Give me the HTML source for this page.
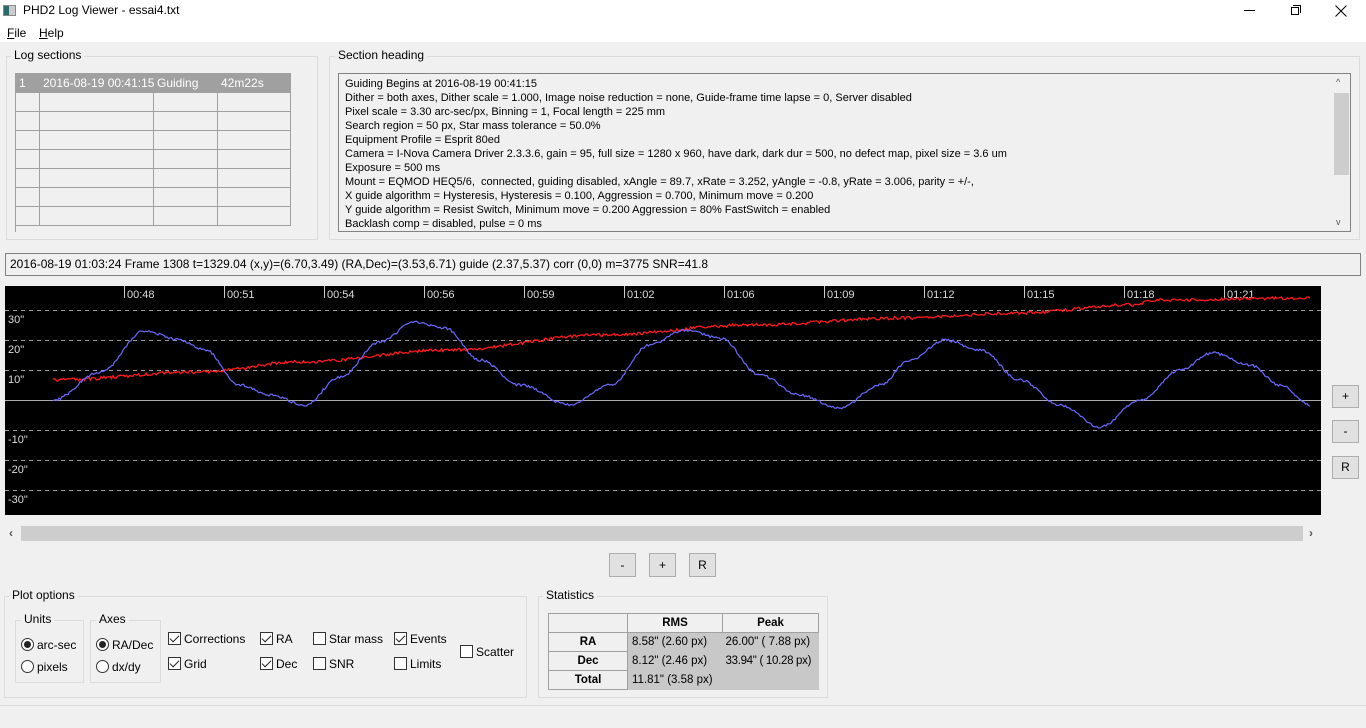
<!DOCTYPE html>
<html><head><meta charset="utf-8">
<style>
*{box-sizing:border-box;margin:0;padding:0}
body{width:1366px;height:728px;background:#f0f0f0;font-family:"Liberation Sans",Arial,sans-serif;font-size:12px;color:#000;position:relative;overflow:hidden}
.a{position:absolute}
.gb{position:absolute;border:1px solid #dcdcdc}
.gl{position:absolute;background:#f0f0f0;padding:0 3px;font-size:12px}
.btn{position:absolute;background:#e1e1e1;border:1px solid #adadad;text-align:center;font-size:12px}
.cb{position:absolute;width:13px;height:13px;border:1px solid #333;background:#fff}
.cb.c::after{content:"";position:absolute;left:3px;top:0px;width:4px;height:8px;border:solid #222;border-width:0 1.5px 1.5px 0;transform:rotate(45deg)}
.rb{position:absolute;width:13px;height:13px;border:1px solid #333;border-radius:50%;background:#fff}
.rb.c::after{content:"";position:absolute;left:2px;top:2px;width:7px;height:7px;border-radius:50%;background:#222}
table{border-collapse:collapse;table-layout:fixed}
.st td,.st th{height:19px;padding:0;white-space:nowrap;overflow:hidden;font-size:11.5px}
</style></head><body>
<div class="a" style="left:0;top:0;width:1366px;height:42px;background:#fff"></div>
<div class="a" style="left:3px;top:5px;width:13px;height:11px;border:1px solid #888;background:#ccc"><div style="width:5px;height:9px;background:#2a6a6a"></div></div>
<div class="a" style="left:23px;top:3px;font-size:12px">PHD2 Log Viewer - essai4.txt</div>
<div class="a" style="left:1244px;top:10px;width:11px;height:1px;background:#000"></div>
<div class="a" style="left:1291px;top:7px;width:8px;height:8px;border:1px solid #000"></div>
<div class="a" style="left:1293px;top:5px;width:8px;height:8px;border-top:1px solid #000;border-right:1px solid #000"></div>
<svg class="a" style="left:1335px;top:5px" width="12" height="12"><path d="M0.5 0.5L11.5 11.5M11.5 0.5L0.5 11.5" stroke="#000" stroke-width="1"/></svg>
<div class="a" style="left:7px;top:26px"><u>F</u>ile</div>
<div class="a" style="left:39px;top:26px"><u>H</u>elp</div>

<div class="gb" style="left:6px;top:56px;width:312px;height:184px"></div>
<div class="gl" style="left:11px;top:48px">Log sections</div>
<div class="a" style="left:15px;top:73px;width:276px;height:159px;border-left:1px solid #a0a0a0;overflow:hidden;background:#f0f0f0">
<div class="a" style="left:0;top:0;width:275px;height:20px;background:#a0a0a0;color:#fff"></div>
<div class="a" style="left:3px;top:3px;color:#fff">1</div>
<div class="a" style="left:27px;top:3px;color:#fff">2016-08-19 00:41:15</div>
<div class="a" style="left:141px;top:3px;color:#fff">Guiding</div>
<div class="a" style="left:205px;top:3px;color:#fff">42m22s</div>
<div class="a" style="left:0;top:20px;width:275px;height:133px;background:repeating-linear-gradient(to bottom,transparent 0,transparent 18px,#a0a0a0 18px,#a0a0a0 19px)"></div>
<div class="a" style="left:23px;top:20px;width:1px;height:133px;background:#a0a0a0"></div>
<div class="a" style="left:137px;top:20px;width:1px;height:133px;background:#a0a0a0"></div>
<div class="a" style="left:201px;top:20px;width:1px;height:133px;background:#a0a0a0"></div>
<div class="a" style="left:274px;top:0;width:1px;height:153px;background:#a0a0a0"></div>
</div>

<div class="gb" style="left:329px;top:56px;width:1031px;height:184px"></div>
<div class="gl" style="left:335px;top:48px">Section heading</div>
<div class="a" style="left:338px;top:73px;width:1013px;height:159px;border:1px solid #828282;background:#f0f0f0;padding:3px 0 0 6px;line-height:14px;font-size:11px">
Guiding Begins at 2016-08-19 00:41:15<br>
Dither = both axes, Dither scale = 1.000, Image noise reduction = none, Guide-frame time lapse = 0, Server disabled<br>
Pixel scale = 3.30 arc-sec/px, Binning = 1, Focal length = 225 mm<br>
Search region = 50 px, Star mass tolerance = 50.0%<br>
Equipment Profile = Esprit 80ed<br>
Camera = I-Nova Camera Driver 2.3.3.6, gain = 95, full size = 1280 x 960, have dark, dark dur = 500, no defect map, pixel size = 3.6 um<br>
Exposure = 500 ms<br>
Mount = EQMOD HEQ5/6,&nbsp; connected, guiding disabled, xAngle = 89.7, xRate = 3.252, yAngle = -0.8, yRate = 3.006, parity = +/-,<br>
X guide algorithm = Hysteresis, Hysteresis = 0.100, Aggression = 0.700, Minimum move = 0.200<br>
Y guide algorithm = Resist Switch, Minimum move = 0.200 Aggression = 80% FastSwitch = enabled<br>
Backlash comp = disabled, pulse = 0 ms
<div class="a" style="left:994px;top:0;width:17px;height:157px;background:#f0f0f0"></div>
<div class="a" style="left:997px;top:1px;font-size:9px;color:#555">^</div>
<div class="a" style="left:995px;top:19px;width:15px;height:82px;background:#cdcdcd"></div>
<div class="a" style="left:997px;top:141px;font-size:9px;color:#555">v</div>
</div>

<div class="a" style="left:5px;top:253px;width:1356px;height:23px;border:1px solid #828282;padding:3px 0 0 4px">2016-08-19 01:03:24 Frame 1308 t=1329.04 (x,y)=(6.70,3.49) (RA,Dec)=(3.53,6.71) guide (2.37,5.37) corr (0,0) m=3775 SNR=41.8</div>

<svg class="a" style="left:5px;top:286px" width="1316" height="229" viewBox="5 286 1316 229">
<rect x="5" y="286" width="1316" height="229" fill="#000"/>
<g stroke="#9a9a9a" stroke-dasharray="4,4" stroke-width="1">
<line x1="5" x2="1321" y1="310.5" y2="310.5"/><line x1="5" x2="1321" y1="340.5" y2="340.5"/><line x1="5" x2="1321" y1="370.5" y2="370.5"/>
<line x1="5" x2="1321" y1="430.5" y2="430.5"/><line x1="5" x2="1321" y1="460.5" y2="460.5"/><line x1="5" x2="1321" y1="490.5" y2="490.5"/>
</g>
<line x1="5" x2="1321" y1="400.5" y2="400.5" stroke="#aaa"/>
<g fill="#ddd" font-size="11" font-family="Liberation Sans,sans-serif">
<text x="8" y="323">30"</text><text x="8" y="353">20"</text><text x="8" y="383">10"</text>
<text x="8" y="443">-10"</text><text x="8" y="473">-20"</text><text x="8" y="503">-30"</text>
</g>
<g id="ticks" fill="#ddd" font-size="11" font-family="Liberation Sans,sans-serif" stroke-width="1"></g>
<polyline id="red" fill="none" stroke="#ff1a1a" stroke-width="1.3"/>
<polyline id="blue" fill="none" stroke="#6a6aff" stroke-width="1.2"/>
</svg>

<div class="a" style="left:5px;top:525px;width:1316px;height:17px;background:#f0f0f0"></div>
<div class="a" style="left:21px;top:526px;width:1282px;height:15px;background:#cdcdcd"></div>
<div class="a" style="left:9px;top:526px;font-size:12px;color:#555;font-weight:bold">‹</div>
<div class="a" style="left:1309px;top:526px;font-size:12px;color:#555;font-weight:bold">›</div>

<div class="btn" style="left:1332px;top:385px;width:27px;height:23px;line-height:21px">+</div>
<div class="btn" style="left:1332px;top:420px;width:27px;height:23px;line-height:21px">-</div>
<div class="btn" style="left:1332px;top:456px;width:27px;height:23px;line-height:21px">R</div>
<div class="btn" style="left:609px;top:553px;width:27px;height:24px;line-height:22px">-</div>
<div class="btn" style="left:649px;top:553px;width:27px;height:24px;line-height:22px">+</div>
<div class="btn" style="left:689px;top:553px;width:27px;height:24px;line-height:22px">R</div>

<div class="gb" style="left:4px;top:596px;width:523px;height:102px"></div>
<div class="gl" style="left:9px;top:588px">Plot options</div>
<div class="gb" style="left:15px;top:620px;width:69px;height:63px"></div>
<div class="gl" style="left:21px;top:612px">Units</div>
<div class="rb c" style="left:21px;top:638px"></div><div class="a" style="left:37px;top:638px">arc-sec</div>
<div class="rb" style="left:21px;top:660px"></div><div class="a" style="left:37px;top:660px">pixels</div>
<div class="gb" style="left:90px;top:620px;width:71px;height:63px"></div>
<div class="gl" style="left:96px;top:612px">Axes</div>
<div class="rb c" style="left:96px;top:638px"></div><div class="a" style="left:112px;top:638px">RA/Dec</div>
<div class="rb" style="left:96px;top:660px"></div><div class="a" style="left:112px;top:660px">dx/dy</div>
<div class="cb c" style="left:168px;top:632px"></div><div class="a" style="left:184px;top:632px">Corrections</div>
<div class="cb c" style="left:168px;top:657px"></div><div class="a" style="left:184px;top:657px">Grid</div>
<div class="cb c" style="left:260px;top:632px"></div><div class="a" style="left:276px;top:632px">RA</div>
<div class="cb c" style="left:260px;top:657px"></div><div class="a" style="left:276px;top:657px">Dec</div>
<div class="cb" style="left:313px;top:632px"></div><div class="a" style="left:329px;top:632px">Star mass</div>
<div class="cb" style="left:313px;top:657px"></div><div class="a" style="left:329px;top:657px">SNR</div>
<div class="cb c" style="left:394px;top:632px"></div><div class="a" style="left:410px;top:632px">Events</div>
<div class="cb" style="left:394px;top:657px"></div><div class="a" style="left:410px;top:657px">Limits</div>
<div class="cb" style="left:460px;top:645px"></div><div class="a" style="left:476px;top:645px">Scatter</div>

<div class="gb" style="left:538px;top:596px;width:290px;height:102px"></div>
<div class="gl" style="left:543px;top:588px">Statistics</div>
<table class="a st" style="left:548px;top:613px;width:270px">
<colgroup><col style="width:79px"><col style="width:95px"><col style="width:96px"></colgroup>
<tr><td style="border:1px solid #a0a0a0;background:#f0f0f0"></td><th style="border:1px solid #a0a0a0;background:#f0f0f0">RMS</th><th style="border:1px solid #a0a0a0;background:#f0f0f0">Peak</th></tr>
<tr><th style="border:1px solid #a0a0a0;background:#f0f0f0">RA</th><td style="background:#c8c8c8;padding-left:4px">8.58" (2.60 px)</td><td style="background:#c8c8c8;padding-left:3px">26.00" ( 7.88 px)</td></tr>
<tr><th style="border:1px solid #a0a0a0;background:#f0f0f0">Dec</th><td style="background:#c8c8c8;padding-left:4px">8.12" (2.46 px)</td><td style="background:#c8c8c8;padding-left:3px;letter-spacing:-0.3px">33.94" ( 10.28 px)</td></tr>
<tr><th style="border:1px solid #a0a0a0;background:#f0f0f0">Total</th><td style="background:#c8c8c8;padding-left:4px">11.81" (3.58 px)</td><td style="background:#c8c8c8"></td></tr>
</table>
<div class="a" style="left:0;top:705px;width:1366px;height:1px;background:#dcdcdc"></div>

<script>
var labels=["00:48","00:51","00:54","00:56","00:59","01:02","01:06","01:09","01:12","01:15","01:18","01:21"];
var t=document.getElementById("ticks"),h="";
labels.forEach(function(l,i){var x=124+i*100;h+='<line x1="'+(x+.5)+'" x2="'+(x+.5)+'" y1="286" y2="298" stroke="#ccc"/><text x="'+(x+3)+'" y="298">'+l+'</text>';});
t.innerHTML=h;
function interp(pts,x){for(var i=0;i<pts.length-1;i++){if(x>=pts[i][0]&&x<=pts[i+1][0]){var a=pts[i],b=pts[i+1],f=(x-a[0])/(b[0]-a[0]);f=(1-Math.cos(f*Math.PI))/2;return a[1]+(b[1]-a[1])*f;}}return pts[pts.length-1][1];}
var B=[[53,400],[100,372],[145,331],[180,340],[205,350],[240,385],[270,395],[305,405],[340,377],[380,342],[415,322],[445,328],[480,360],[520,385],[570,405],[610,385],[650,345],[685,330],[720,338],[760,375],[800,395],[840,408],[880,385],[910,360],[945,340],[980,350],[1020,380],[1060,405],[1100,427],[1140,400],[1180,370],[1212,353],[1250,365],[1280,385],[1310,405]];
var R=[[53,380],[200,372],[300,362],[450,350],[600,335],[750,325],[900,318],[1020,313],[1130,305],[1160,300],[1310,298]];
function mk(P,n){var s=[];for(var x=53;x<=1310;x+=1.5){s.push(x.toFixed(1)+","+(interp(P,x)+(Math.random()-.5)*n).toFixed(1));}return s.join(" ");}
document.getElementById("red").setAttribute("points",mk(R,3));
document.getElementById("blue").setAttribute("points",mk(B,2.5));
</script>
</body></html>
